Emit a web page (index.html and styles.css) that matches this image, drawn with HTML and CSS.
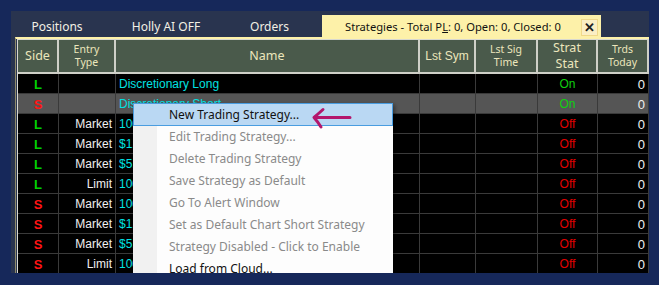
FILE: index.html
```html
<!DOCTYPE html>
<html lang="en">
<head>
    <meta charset="UTF-8">
    <title>Strategies</title>
    <link rel="stylesheet" href="styles.css">
</head>
<body>

<div class="panel">
    <div class="tabs">
        <div class="tab tab-positions">Positions</div>
        <div class="tab tab-holly">Holly AI OFF</div>
        <div class="tab tab-orders">Orders</div>
        <div class="tab tab-active">
            <span>Strategies - Total P<u>L</u>: 0, Open: 0, Closed: 0</span>
            <span class="close-btn">&#x2715;</span>
        </div>
    </div>

    <div class="page">
        <div class="grid">
            <div class="row head">
                <div class="cell">Side</div>
                <div class="cell small">Entry<br>Type</div>
                <div class="cell">Name</div>
                <div class="cell mid">Lst Sym</div>
                <div class="cell small">Lst Sig<br>Time</div>
                <div class="cell">Strat<br>Stat</div>
                <div class="cell small">Trds<br>Today</div>
            </div>

            <div class="row">
                <div class="cell side long">L</div>
                <div class="cell type"></div>
                <div class="cell name">Discretionary Long</div>
                <div class="cell"></div>
                <div class="cell"></div>
                <div class="cell stat on">On</div>
                <div class="cell num">0</div>
            </div>
            <div class="row selected">
                <div class="cell side short">S</div>
                <div class="cell type"></div>
                <div class="cell name">Discretionary Short</div>
                <div class="cell"></div>
                <div class="cell"></div>
                <div class="cell stat on">On</div>
                <div class="cell num">0</div>
            </div>
            <div class="row">
                <div class="cell side long">L</div>
                <div class="cell type">Market</div>
                <div class="cell name">100 Shares</div>
                <div class="cell"></div>
                <div class="cell"></div>
                <div class="cell stat off">Off</div>
                <div class="cell num">0</div>
            </div>
            <div class="row">
                <div class="cell side long">L</div>
                <div class="cell type">Market</div>
                <div class="cell name">$1,000</div>
                <div class="cell"></div>
                <div class="cell"></div>
                <div class="cell stat off">Off</div>
                <div class="cell num">0</div>
            </div>
            <div class="row">
                <div class="cell side long">L</div>
                <div class="cell type">Market</div>
                <div class="cell name">$5,000</div>
                <div class="cell"></div>
                <div class="cell"></div>
                <div class="cell stat off">Off</div>
                <div class="cell num">0</div>
            </div>
            <div class="row">
                <div class="cell side long">L</div>
                <div class="cell type">Limit</div>
                <div class="cell name">100 Shares</div>
                <div class="cell"></div>
                <div class="cell"></div>
                <div class="cell stat off">Off</div>
                <div class="cell num">0</div>
            </div>
            <div class="row">
                <div class="cell side short">S</div>
                <div class="cell type">Market</div>
                <div class="cell name">100 Shares</div>
                <div class="cell"></div>
                <div class="cell"></div>
                <div class="cell stat off">Off</div>
                <div class="cell num">0</div>
            </div>
            <div class="row">
                <div class="cell side short">S</div>
                <div class="cell type">Market</div>
                <div class="cell name">$1,000</div>
                <div class="cell"></div>
                <div class="cell"></div>
                <div class="cell stat off">Off</div>
                <div class="cell num">0</div>
            </div>
            <div class="row">
                <div class="cell side short">S</div>
                <div class="cell type">Market</div>
                <div class="cell name">$5,000</div>
                <div class="cell"></div>
                <div class="cell"></div>
                <div class="cell stat off">Off</div>
                <div class="cell num">0</div>
            </div>
            <div class="row">
                <div class="cell side short">S</div>
                <div class="cell type">Limit</div>
                <div class="cell name">100 Shares</div>
                <div class="cell"></div>
                <div class="cell"></div>
                <div class="cell stat off">Off</div>
                <div class="cell num">0</div>
            </div>
        </div>

        <!-- right-click menu over the grid -->
        <div class="menu">
            <div class="item hot">New Trading Strategy...</div>
            <div class="item dis">Edit Trading Strategy...</div>
            <div class="item dis">Delete Trading Strategy</div>
            <div class="item dis">Save Strategy as Default</div>
            <div class="item dis">Go To Alert Window</div>
            <div class="item dis">Set as Default Chart Short Strategy</div>
            <div class="item dis">Strategy Disabled - Click to Enable</div>
            <div class="item">Load from Cloud...</div>
        </div>

        <svg class="arrow" width="44" height="24" viewBox="0 0 44 24">
            <path d="M40 11.5 L5 11.5 M13 3.5 Q8 8 4 11.5 Q8 16 11 21" fill="none" stroke="#b3166c" stroke-width="3" stroke-linecap="round" stroke-linejoin="round"/>
        </svg>
    </div>
</div>

</body>
</html>
```

FILE: styles.css
```css
body {
    margin: 0;
    padding: 11px 10px 12px 11px;
    background-color: #16285a;
    font-family: 'Noto Sans', 'Liberation Sans', sans-serif;
    height: 262px;
}
.panel {
    background-color: #29344f;
    height: 262px;
    overflow: hidden;
    display: flex;
    flex-direction: column;
}
.tabs {
    display: flex;
    flex-shrink: 0;
    align-items: flex-end;
    height: 26px;
    padding-left: 4px;
}
.tab {
    color: #f2f0e4;
    font-size: 12px;
    height: 22px;
    line-height: 24px;
    text-align: center;
}
.tab-positions { width: 84px; }
.tab-holly { width: 134px; }
.tab-orders { width: 73px; }
.tab-active {
    margin-left: 16px;
    width: 279px;
    background-color: #fdf1a9;
    color: #111;
    font-size: 11.2px;
    display: flex;
    align-items: center;
    padding-left: 23px;
    padding-top: 2px;
    box-sizing: border-box;
}
.close-btn {
    margin-left: auto;
    margin-right: 3px;
    width: 15px;
    height: 15px;
    line-height: 15px;
    border: 1px solid #f0d98a;
    background-color: #fbefc4;
    font-size: 13px;
    font-weight: bold;
    color: #222;
}
.page {
    position: relative;
    flex: 1;
    margin-left: 4px;
    border-top: 2px solid #fdf1a9;
    border-left: 1px solid #8e8a6a;
}
.grid {
    margin-left: 1px;
    border-top: 1px solid #d8d8d0;
    border-left: 1px solid #d8d8d0;
    font-family: 'Liberation Sans', Arial, sans-serif;
    font-size: 12px;
}
.row {
    display: grid;
    grid-template-columns: 41px 57px 304px 56px 62px 60px 51px;
    height: 20px;
    background-color: #000;
}
.row .cell {
    border-right: 1px solid #3a3a3a;
    border-bottom: 1px solid #3a3a3a;
    line-height: 21px;
    padding: 0 3px;
    white-space: nowrap;
    overflow: hidden;
    color: #f0f0f0;
}
.row.selected {
    background-color: #555;
}
.row.head {
    height: 34px;
    background-color: #4a5a4b;
}
.row.head .cell {
    font-family: 'Noto Sans', sans-serif;
    border-right: 2px solid #cfd0c8;
    border-bottom: 2px solid #cfd0c8;
    color: #ece6bc;
    font-size: 12.5px;
    line-height: 16px;
    display: flex;
    align-items: center;
    justify-content: center;
    text-align: center;
}
.row.head .cell.small {
    font-size: 10.5px;
    line-height: 13px;
}
.row.head .cell.mid {
    font-family: 'Liberation Sans', sans-serif;
    font-size: 12px;
}
.side {
    text-align: center;
    font-weight: bold;
    font-size: 13px;
}
.side.long { color: #00d000 !important; }
.side.short { color: #ff1414 !important; }
.type { text-align: right; }
.name { color: #00e2e2 !important; }
.stat { text-align: center; }
.stat.on { color: #10d010 !important; }
.stat.off { color: #e00000 !important; }
.num {
    text-align: right;
    font-size: 13px;
}
.menu {
    position: absolute;
    left: 117px;
    top: 64px;
    width: 260px;
    background: linear-gradient(to right, #f1f1f1 24px, #fdfdfd 24px);
    box-shadow: 2px 2px 4px rgba(0, 0, 0, 0.4);
    font-family: 'Noto Sans', sans-serif;
    font-size: 12px;
    color: #111;
}
.menu .item {
    height: 22px;
    line-height: 22px;
    padding-left: 36px;
    white-space: nowrap;
    overflow: hidden;
}
.menu .item.hot {
    height: 23px;
    line-height: 21px;
    box-sizing: border-box;
    border: 1px solid #4a9de0;
    background-color: #bad8f3;
    padding-left: 35px;
}
.menu .item.dis {
    color: #8a8a8a;
}
.arrow {
    position: absolute;
    left: 294px;
    top: 67px;
}
```
